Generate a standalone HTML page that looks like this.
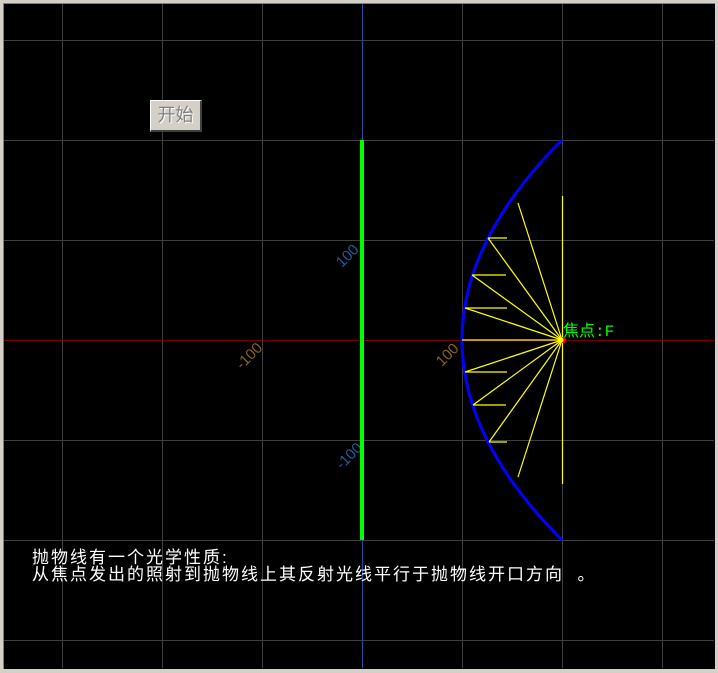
<!DOCTYPE html>
<html><head><meta charset="utf-8"><style>
html,body{margin:0;padding:0;background:#d4d0c8;width:718px;height:673px;overflow:hidden}
#c{position:absolute;left:3px;top:3px;width:712px;height:666px;background:#000;box-shadow:inset 1px 1px 0 #808080}
svg{position:absolute;left:0;top:0}
.btn{position:absolute;left:150px;top:100px;width:52px;height:32px;background:#d4d0c8;border-top:1px solid #fff;border-left:1px solid #fff;border-right:2px solid #404040;border-bottom:2px solid #404040;box-sizing:border-box;font:18px "Liberation Sans","Noto Sans CJK SC",sans-serif;color:#808080;text-align:center;line-height:29px;text-shadow:1px 1px 0 #fff}
.t{position:absolute;left:32px;color:#fff;font:17px "Liberation Sans","Noto Sans CJK SC",sans-serif;letter-spacing:2px;line-height:18px;white-space:nowrap}
</style></head><body>
<div id="c"></div>
<svg width="718" height="673" xmlns="http://www.w3.org/2000/svg">
<g stroke="#404040" stroke-width="1">
<line x1="62.5" y1="4" x2="62.5" y2="668"/><line x1="162.5" y1="4" x2="162.5" y2="668"/><line x1="262.5" y1="4" x2="262.5" y2="668"/>
<line x1="462.5" y1="4" x2="462.5" y2="668"/><line x1="562.5" y1="4" x2="562.5" y2="668"/><line x1="662.5" y1="4" x2="662.5" y2="668"/>
<line x1="4" y1="40.5" x2="714" y2="40.5"/><line x1="4" y1="140.5" x2="714" y2="140.5"/><line x1="4" y1="240.5" x2="714" y2="240.5"/>
<line x1="4" y1="440.5" x2="714" y2="440.5"/><line x1="4" y1="540.5" x2="714" y2="540.5"/><line x1="4" y1="640.5" x2="714" y2="640.5"/>
</g>
<line x1="362.5" y1="4" x2="362.5" y2="668" stroke="#1e50a0"/>
<line x1="4" y1="340.5" x2="714" y2="340.5" stroke="#7a0000"/>
<g font-family="Liberation Sans,sans-serif" font-size="15">
<text transform="translate(342,268) rotate(-45)" fill="#1e5fa0">100</text>
<text transform="translate(342,470) rotate(-45)" fill="#1e5fa0">-100</text>
<text transform="translate(242,370) rotate(-45)" fill="#8a6418">-100</text>
<text transform="translate(442,367) rotate(-45)" fill="#8a6418">100</text>
</g>
<line x1="362" y1="140" x2="362" y2="540" stroke="#00ff00" stroke-width="4"/>
<path d="M562,140 Q362,340 562,540" fill="none" stroke="#0000ff" stroke-width="3"/>
<g stroke="#ffff00" stroke-width="1.2">
<line x1="562.5" y1="196" x2="562.5" y2="484"/>
<line x1="562" y1="340" x2="462" y2="340"/>
<line x1="562" y1="340" x2="488" y2="238"/><line x1="488" y1="238" x2="507" y2="238"/>
<line x1="562" y1="340" x2="472" y2="275"/><line x1="472" y1="275" x2="506" y2="275"/>
<line x1="562" y1="340" x2="465" y2="308"/><line x1="465" y1="308" x2="507" y2="308"/>
<line x1="562" y1="340" x2="518" y2="203"/>
<line x1="562" y1="340" x2="465" y2="372"/><line x1="465" y1="372" x2="507" y2="372"/>
<line x1="562" y1="340" x2="473" y2="405"/><line x1="473" y1="405" x2="506" y2="405"/>
<line x1="562" y1="340" x2="489" y2="442"/><line x1="489" y1="442" x2="507" y2="442"/>
<line x1="562" y1="340" x2="518" y2="477"/>
</g>
<circle cx="563" cy="340" r="3" fill="#ff0000"/>
<circle cx="561" cy="340" r="2.5" fill="#ffff00"/>
<text x="563" y="336" fill="#00ff00" font-family="Liberation Mono,Noto Sans CJK SC,monospace" font-size="16">焦点:F</text>
</svg>
<div class="btn">开始</div>
<div class="t" style="top:549px">抛物线有一个光学性质:</div>
<div class="t" style="top:566px">从焦点发出的照射到抛物线上其反射光线平行于抛物线开口方向&nbsp;&nbsp;。</div>
</body></html>
